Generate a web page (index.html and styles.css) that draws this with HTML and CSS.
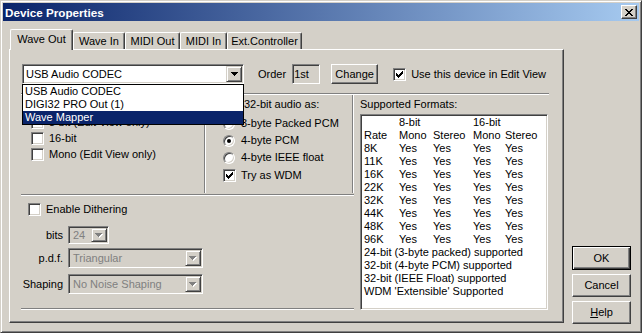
FILE: index.html
```html
<!DOCTYPE html>
<html>
<head>
<meta charset="utf-8">
<title>Device Properties</title>
<link rel="stylesheet" href="styles.css">
</head>
<body>
<div class="window">
  <div class="titlebar">
    <span class="title">Device Properties</span>
    <span class="close"><svg width="8" height="7" viewBox="0 0 8 7" shape-rendering="crispEdges"><path fill="#000" d="M0 0h2v1H0zM6 0h2v1H6zM1 1h2v1H1zM5 1h2v1H5zM2 2h4v1H2zM3 3h2v1H3zM2 4h4v1H2zM1 5h2v1H1zM5 5h2v1H5zM0 6h2v1H0zM6 6h2v1H6z"/></svg></span>
  </div>
  <div class="main">
    <div class="left">
      <div class="tabs">
        <div class="tab sel">Wave Out</div>
        <div class="tab">Wave In</div>
        <div class="tab">MIDI Out</div>
        <div class="tab">MIDI In</div>
        <div class="tab">Ext.Controller</div>
      </div>
      <div class="panel">
        <div class="row1">
          <div class="combo main-combo">
            <span class="ctext">USB Audio CODEC</span>
            <span class="arrow"><svg width="7" height="4" viewBox="0 0 7 4" shape-rendering="crispEdges"><path fill="#000" d="M0 0h7v1H0zM1 1h5v1H1zM2 2h3v1H2zM3 3h1v1H3z"/></svg></span>
          </div>
          <span class="order-lbl">Order</span>
          <div class="order-box">1st</div>
          <div class="btn change">Change</div>
          <span class="chk use-chk"><svg width="7" height="7" viewBox="0 0 7 7" shape-rendering="crispEdges"><path fill="#000" d="M6 0h1v1H6zM5 1h2v1H5zM0 2h1v1H0zM4 2h3v1H4zM0 3h2v1H0zM3 3h3v1H3zM0 4h5v1H0zM1 5h3v1H1zM2 6h1v1H2z"/></svg></span>
          <span class="use-lbl">Use this device in Edit View</span>
        </div>
        <div class="hr top-hr"></div>
        <div class="body">
          <div class="col-left">
            <div class="upper">
              <div class="grp-bits">
                <div class="opt"><span class="chk"></span><span class="olbl">8-bit (Edit View only)</span></div>
                <div class="opt"><span class="chk"></span><span class="olbl">16-bit</span></div>
                <div class="opt"><span class="chk"></span><span class="olbl">Mono (Edit View only)</span></div>
              </div>
              <div class="vline"></div>
              <div class="grp-save">
                <div class="save-lbl">32-bit audio as:</div>
                <div class="ropt"><span class="radio"></span><span class="rlbl">3-byte Packed PCM</span></div>
                <div class="ropt"><span class="radio on"></span><span class="rlbl">4-byte PCM</span></div>
                <div class="ropt"><span class="radio"></span><span class="rlbl">4-byte IEEE float</span></div>
                <div class="opt wdm"><span class="chk"><svg width="7" height="7" viewBox="0 0 7 7" shape-rendering="crispEdges"><path fill="#000" d="M6 0h1v1H6zM5 1h2v1H5zM0 2h1v1H0zM4 2h3v1H4zM0 3h2v1H0zM3 3h3v1H3zM0 4h5v1H0zM1 5h3v1H1zM2 6h1v1H2z"/></svg></span><span class="olbl">Try as WDM</span></div>
              </div>
              <div class="vline"></div>
            </div>
            <div class="hr mid-hr"></div>
            <div class="dither">
              <div class="opt enable"><span class="chk"></span><span class="olbl">Enable Dithering</span></div>
              <div class="frow f-bits">
                <span class="flbl">bits</span>
                <div class="combo dis c-bits">
                  <span class="ctext">24</span>
                  <span class="arrow"><svg width="8" height="5" viewBox="0 0 8 5" shape-rendering="crispEdges"><path fill="#fff" d="M1 1h7v1H1zM2 2h5v1H2zM3 3h3v1H3zM4 4h1v1H4z"/><path fill="#808080" d="M0 0h7v1H0zM1 1h5v1H1zM2 2h3v1H2zM3 3h1v1H3z"/></svg></span>
                </div>
              </div>
              <div class="frow f-pdf">
                <span class="flbl">p.d.f.</span>
                <div class="combo dis c-wide">
                  <span class="ctext">Triangular</span>
                  <span class="arrow"><svg width="8" height="5" viewBox="0 0 8 5" shape-rendering="crispEdges"><path fill="#fff" d="M1 1h7v1H1zM2 2h5v1H2zM3 3h3v1H3zM4 4h1v1H4z"/><path fill="#808080" d="M0 0h7v1H0zM1 1h5v1H1zM2 2h3v1H2zM3 3h1v1H3z"/></svg></span>
                </div>
              </div>
              <div class="frow f-shp">
                <span class="flbl">Shaping</span>
                <div class="combo dis c-wide">
                  <span class="ctext">No Noise Shaping</span>
                  <span class="arrow"><svg width="8" height="5" viewBox="0 0 8 5" shape-rendering="crispEdges"><path fill="#fff" d="M1 1h7v1H1zM2 2h5v1H2zM3 3h3v1H3zM4 4h1v1H4z"/><path fill="#808080" d="M0 0h7v1H0zM1 1h5v1H1zM2 2h3v1H2zM3 3h1v1H3z"/></svg></span>
                </div>
              </div>
            </div>
            <div class="hr"></div>
          </div>
          <div class="col-right">
            <div class="fmt-lbl">Supported Formats:</div>
            <div class="fmt-box">
              <div class="frow5"><span></span><span>8-bit</span><span></span><span>16-bit</span><span></span></div>
              <div class="frow5"><span>Rate</span><span>Mono</span><span>Stereo</span><span>Mono</span><span>Stereo</span></div>
              <div class="frow5"><span>8K</span><span>Yes</span><span>Yes</span><span>Yes</span><span>Yes</span></div>
              <div class="frow5"><span>11K</span><span>Yes</span><span>Yes</span><span>Yes</span><span>Yes</span></div>
              <div class="frow5"><span>16K</span><span>Yes</span><span>Yes</span><span>Yes</span><span>Yes</span></div>
              <div class="frow5"><span>22K</span><span>Yes</span><span>Yes</span><span>Yes</span><span>Yes</span></div>
              <div class="frow5"><span>32K</span><span>Yes</span><span>Yes</span><span>Yes</span><span>Yes</span></div>
              <div class="frow5"><span>44K</span><span>Yes</span><span>Yes</span><span>Yes</span><span>Yes</span></div>
              <div class="frow5"><span>48K</span><span>Yes</span><span>Yes</span><span>Yes</span><span>Yes</span></div>
              <div class="frow5"><span>96K</span><span>Yes</span><span>Yes</span><span>Yes</span><span>Yes</span></div>
              <div class="fline">24-bit (3-byte packed) supported</div>
              <div class="fline">32-bit (4-byte PCM) supported</div>
              <div class="fline">32-bit (IEEE Float) supported</div>
              <div class="fline">WDM 'Extensible' Supported</div>
            </div>
          </div>
        </div>
        <div class="droplist">
          <div class="ditem">USB Audio CODEC</div>
          <div class="ditem">DIGI32 PRO Out (1)</div>
          <div class="ditem hl">Wave Mapper</div>
        </div>
      </div>
    </div>
    <div class="buttons">
      <div class="btn ok">OK</div>
      <div class="btn">Cancel</div>
      <div class="btn"><span><u>H</u>elp</span></div>
    </div>
  </div>
</div>
</body>
</html>
```
FILE: styles.css
```css
* { box-sizing: border-box; }
html, body { margin: 0; padding: 0; }
body {
  font-family: "Liberation Sans", Arial, sans-serif;
  font-size: 11px;
  line-height: 13px;
  color: #000;
  background: #d4d0c8;
}
.window {
  width: 642px;
  height: 333px;
  background: #d4d0c8;
  border: 1px solid;
  border-color: #d4d0c8 #404040 #404040 #d4d0c8;
  box-shadow: inset 1px 1px #fff, inset -1px -1px #808080;
  padding: 2px;
  display: flex;
  flex-direction: column;
}
.titlebar {
  height: 18px;
  background: linear-gradient(to right, #0a246a, #a6caf0);
  display: flex;
  align-items: center;
  justify-content: space-between;
  padding: 0 2px 0 2px;
}
.title { color: #fff; font-weight: bold; font-size: 11.7px; }
.close {
  width: 16px;
  height: 14px;
  background: #d4d0c8;
  border: 1px solid;
  border-color: #fff #404040 #404040 #fff;
  box-shadow: inset -1px -1px #808080;
  display: flex;
  align-items: center;
  justify-content: center;
}
.close svg { display: block; margin-left: -1px; }
.main { display: flex; padding: 8px 0 0 6px; }
.left { width: 555px; }
.tabs { display: flex; align-items: flex-end; height: 20px; padding-left: 1px; }
.tab {
  height: 17px;
  display: flex;
  align-items: center;
  justify-content: center;
  border-left: 1px solid #fff;
  border-top: 1px solid #fff;
  border-right: 1px solid #404040;
  box-shadow: inset -1px 0 #808080;
  border-radius: 2px 2px 0 0;
  background: #d4d0c8;
}
.tab:nth-child(1) { width: 63px; }
.tab:nth-child(2) { width: 52px; }
.tab:nth-child(3) { width: 55px; }
.tab:nth-child(4) { width: 47px; }
.tab:nth-child(5) { width: 75px; }
.tab.sel {
  height: 21px;
  margin-bottom: -1px;
  position: relative;
  z-index: 1;
  padding-bottom: 1px;
}
.panel {
  position: relative;
  height: 274px;
  border: 1px solid;
  border-color: #fff #404040 #404040 #fff;
  box-shadow: inset -1px -1px #808080;
  padding: 14px 0 0 11px;
}
.row1 { display: flex; align-items: center; height: 20px; margin-left: 1px; }
.combo {
  position: relative;
  display: flex;
  align-items: center;
  background: #fff;
  border: 1px solid;
  border-color: #808080 #fff #fff #808080;
  box-shadow: inset 1px 1px #404040, inset -1px -1px #d4d0c8;
  padding: 1px;
}
.main-combo { width: 222px; height: 20px; }
.ctext { flex: 1; padding-left: 2px; white-space: nowrap; overflow: hidden; }
.arrow {
  width: 16px;
  height: 100%;
  background: #d4d0c8;
  border: 1px solid;
  border-color: #d4d0c8 #404040 #404040 #d4d0c8;
  box-shadow: inset 1px 1px #fff, inset -1px -1px #808080;
  display: flex;
  align-items: center;
  justify-content: center;
}
.arrow svg { display: block; }
.order-lbl { margin-left: 14px; }
.order-box {
  margin-left: 6px;
  width: 28px;
  height: 20px;
  border: 1px solid;
  border-color: #808080 #fff #fff #808080;
  box-shadow: inset 1px 1px #404040, inset -1px -1px #d4d0c8;
  padding: 0 0 0 1px;
  display: flex;
  align-items: center;
}
.btn {
  display: flex;
  align-items: center;
  justify-content: center;
  background: #d4d0c8;
  border: 1px solid;
  border-color: #fff #404040 #404040 #fff;
  box-shadow: inset -1px -1px #808080;
}
.change { margin-left: 11px; width: 47px; height: 20px; }
.chk {
  flex: none;
  display: block;
  width: 13px;
  height: 13px;
  background: #fff;
  border: 1px solid;
  border-color: #808080 #fff #fff #808080;
  box-shadow: inset 1px 1px #404040, inset -1px -1px #d4d0c8;
}
.chk svg { display: block; margin: 2px 0 0 2px; }
.use-chk { margin-left: 15px; }
.use-lbl { margin-left: 5px; white-space: nowrap; }
.hr {
  height: 2px;
  border-top: 1px solid #808080;
  border-bottom: 1px solid #fff;
}
.top-hr { margin-top: 9px; width: 528px; }
.body { display: flex; }
.col-left { width: 333px; }
.upper { display: flex; height: 98px; }
.grp-bits { width: 183px; padding: 19px 0 0 10px; }
.opt { display: flex; align-items: center; height: 16px; white-space: nowrap; }
.olbl { margin-left: 5px; }
.vline {
  width: 2px;
  height: 98px;
  border-left: 1px solid #808080;
  border-right: 1px solid #fff;
}
.grp-save { width: 146px; padding: 3px 0 0 17px; }
.save-lbl { padding-left: 21px; height: 13px; white-space: nowrap; }
.ropt { display: flex; align-items: center; height: 17px; white-space: nowrap; }
.ropt:first-of-type { margin-top: 4px; }
.save-lbl + .ropt { margin-top: 4px; }
.radio {
  flex: none;
  position: relative;
  width: 12px;
  height: 12px;
  border-radius: 50%;
  background: #fff;
  border: 1px solid;
  border-color: #808080 #fff #fff #808080;
  box-shadow: inset 1px 1px #404040, inset -1px -1px #d4d0c8;
}
.radio.on::after {
  content: "";
  position: absolute;
  left: 3px;
  top: 3px;
  width: 4px;
  height: 4px;
  border-radius: 50%;
  background: #000;
}
.rlbl { margin-left: 6px; }
.wdm { margin-top: 2px; height: 14px; }
.mid-hr { margin-top: 1px; }
.dither { height: 112px; padding: 6px 0 0 7px; }
.enable { height: 14px; }
.frow { display: flex; align-items: center; margin-left: -7px; }
.flbl { width: 42px; text-align: right; margin-right: 5px; white-space: nowrap; }
.f-bits { height: 18px; margin-top: 10px; }
.f-pdf { height: 20px; margin-top: 4px; }
.f-shp { height: 20px; margin-top: 6px; }
.combo.dis { background: #d4d0c8; color: #808080; height: 100%; }
.combo.dis .ctext { padding-left: 3px; }
.c-bits { width: 41px; }
.c-wide { width: 135px; }
.col-right { margin-left: 6px; width: 188px; }
.fmt-lbl { margin-top: 3px; height: 13px; white-space: nowrap; }
.fmt-box {
  margin-top: 3px;
  height: 196px;
  background: #fff;
  border: 1px solid;
  border-color: #808080 #fff #fff #808080;
  box-shadow: inset 1px 1px #404040, inset -1px -1px #d4d0c8;
  padding: 1px 0 0 3px;
}
.frow5 {
  display: grid;
  grid-template-columns: 35px 34px 40px 32px 1fr;
  height: 13px;
  white-space: nowrap;
}
.fline { height: 13px; white-space: nowrap; }
.droplist {
  position: absolute;
  left: 12px;
  top: 34px;
  width: 222px;
  height: 41px;
  background: #fff;
  border: 1px solid #000;
  z-index: 5;
}
.ditem { height: 13px; padding-left: 2px; white-space: nowrap; }
.ditem.hl { background: #0a246a; color: #fff; }
.buttons {
  display: flex;
  flex-direction: column;
  gap: 4px;
  margin-left: 8px;
  padding-top: 217px;
}
.buttons .btn { width: 59px; height: 23px; }
.buttons .btn.ok {
  height: 24px;
  border: 1px solid #000;
  box-shadow: inset 1px 1px #fff, inset -1px -1px #404040, inset -2px -2px #808080;
}
```
